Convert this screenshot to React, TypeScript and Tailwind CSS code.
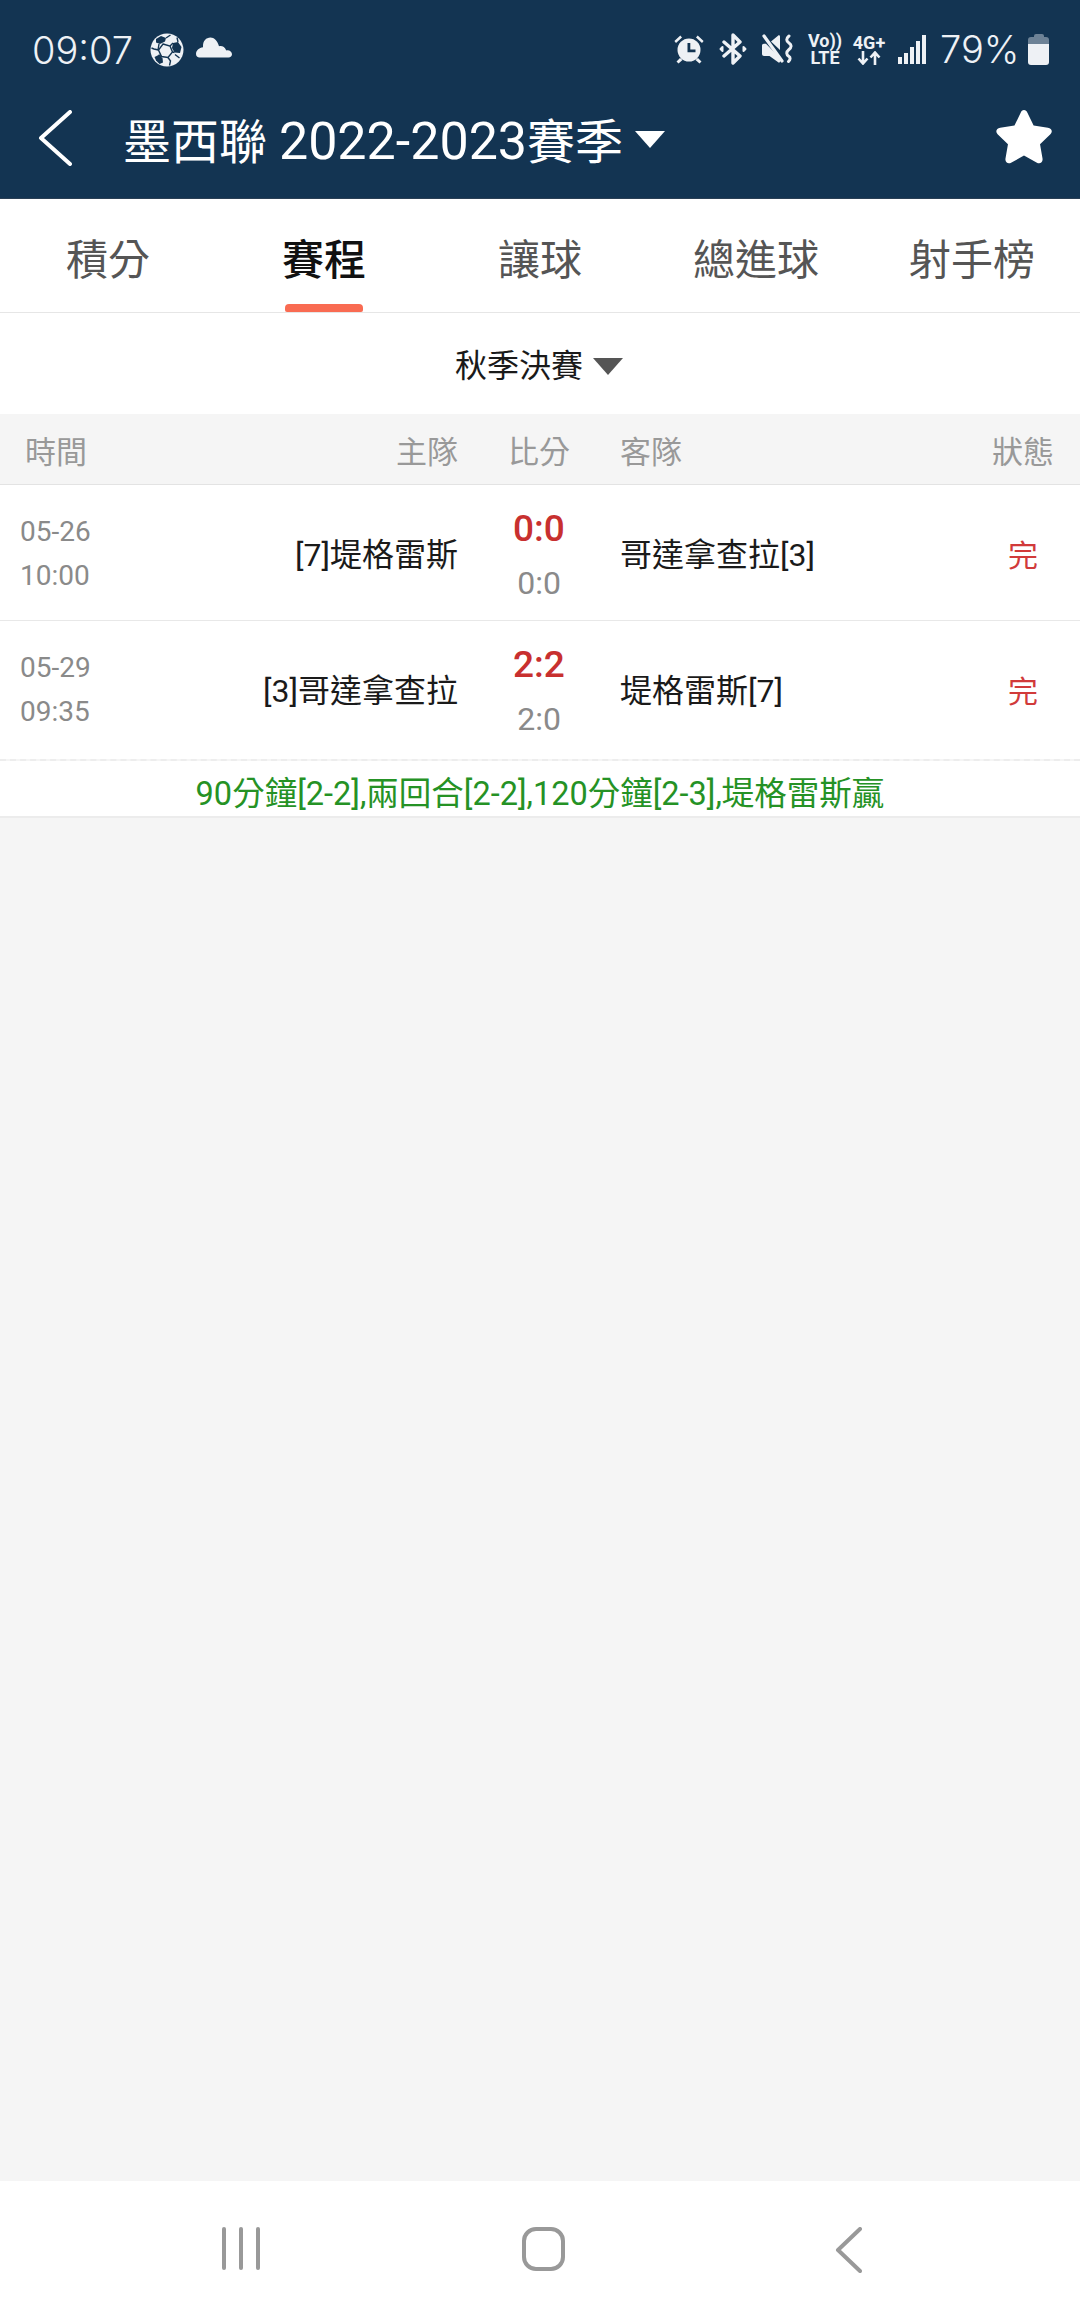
const FONT = "font-['Roboto','Noto_Sans_CJK_TC',sans-serif]";

const tabs = ["積分", "賽程", "讓球", "總進球", "射手榜"];

const matches = [
  { date: "05-26", time: "10:00", home: "[7]堤格雷斯", away: "哥達拿查拉[3]", score: "0:0", half: "0:0" },
  { date: "05-29", time: "09:35", home: "[3]哥達拿查拉", away: "堤格雷斯[7]", score: "2:2", half: "2:0" },
];

function SoccerBall() {
  return (
    <svg width="34" height="34" viewBox="0 0 34 34">
      <circle cx="17" cy="17" r="16.5" fill="#eef1f5" />
      <g fill="#133452">
        <path d="M23 10l5-1 3.500 5-1.500 6-5.500-.5L22 15z" />
        <path d="M6 6l5-3 5 2-1 3.500-5 2.500-4-1.500z" />
        <path d="M4.500 24l4-2 4 3 .5 4.500-3.500 1.500-3.500-3.500z" />
      </g>
      <g fill="none" stroke="#133452" strokeWidth="1.400">
        <path d="M13 11l7 2 2.500 6-4.500 5.500-6.500-1L8.500 17z" />
        <path d="M16 5l4.500-3M20 13l3-3M27 4.500L28 9M22.500 19l2 .5M18 24.500l2.500 3.500-1 4.500M25 21.500l4.500 3.500M11.500 23.500l-3 -1.500M8.500 17L4 16l-2.500-1M9 11l-1 6" />
      </g>
    </svg>
  );
}

function Cloud() {
  return (
    <svg width="36" height="21" viewBox="0 0 36 21">
      <path d="M3.500 20.500h29c2 0 3.500-1.500 3.500-3.200 0-2.300-2-4-4.500-4-.4 0-.8 0-1.200.1C29 10.500 27 9 24.500 9c-.5 0-1 .1-1.500.2C21.500 3.700 18 .5 14.500.5 10 .5 7 4 7 9c0 .5 0 .9.100 1.300C3 11 0 13.500 0 17c0 2 1.500 3.500 3.500 3.500z" fill="#eef1f5" />
    </svg>
  );
}

function Alarm() {
  return (
    <svg width="30" height="30" viewBox="0 0 30 30" fill="#eef1f5">
      <circle cx="15" cy="16" r="11.500" />
      <path d="M2 9L8 3.500 6.300 1.500.4 7zM28 9L22 3.500l1.700-2L29.600 7z" />
      <path d="M6 24l-3.500 3.500 2 2 4-3.500zM24 24l3.500 3.500-2 2-4-3.500z" />
      <path d="M13.500 9h2.800v6.500h5.200v2.700h-8z" fill="#133452" />
    </svg>
  );
}

function Bluetooth() {
  return (
    <svg width="28" height="32" viewBox="0 0 28 32" fill="none" stroke="#eef1f5" strokeWidth="3.400" strokeLinejoin="round" strokeLinecap="round">
      <path d="M5 9l16 14-7 7V2l7 7L5 23" />
      <path d="M1.500 16l2-2v4zM26.500 16l-2-2v4z" fill="#eef1f5" strokeWidth="2" />
    </svg>
  );
}

function Mute() {
  return (
    <svg width="32" height="30" viewBox="0 0 32 30">
      <path d="M1 11.500c0-1 .8-1.800 1.800-1.800H5L19 24v3.500c0 1-1 1.500-1.800.8L8.500 22H3c-1.100 0-2-.9-2-2z" fill="#eef1f5" />
      <path d="M10 7.500l7-5.800c.8-.7 2-.3 2 .8V16z" fill="#eef1f5" />
      <path d="M3 2l18 25" stroke="#eef1f5" strokeWidth="3.200" strokeLinecap="round" />
      <path d="M28 2c-3 2.500-3 5 0 7 3 2 2.500 4.500 0 6.500-3 2.500-3 5 0 7 1.500 1 1.500 3-.5 5" fill="none" stroke="#eef1f5" strokeWidth="3" strokeLinecap="round" />
    </svg>
  );
}

function Arrows() {
  return (
    <svg width="24" height="14" viewBox="0 0 24 14" fill="none" stroke="#eef1f5" strokeWidth="2.600">
      <path d="M6 0v12M1.500 7.500L6 12.500l4.500-5" />
      <path d="M18 14V2M13.500 6.500L18 1.500l4.500 5" />
    </svg>
  );
}

function Signal() {
  return (
    <div className="flex items-end gap-[2px] h-[29px]">
      <span className="w-[4px] h-[7px] bg-[#eef1f5]" />
      <span className="w-[4px] h-[11px] bg-[#eef1f5]" />
      <span className="w-[4px] h-[17px] bg-[#eef1f5]" />
      <span className="w-[4px] h-[23px] bg-[#eef1f5]" />
      <span className="w-[4px] h-[29px] bg-[#eef1f5]" />
    </div>
  );
}

function Battery() {
  return (
    <div className="flex flex-col items-center w-[21px] h-[31px]">
      <span className="w-[10px] h-[3px] rounded-t-[2px] bg-[#6d8296]" />
      <span className="w-[21px] h-[7px] rounded-t-[3px] bg-[#6d8296]" />
      <span className="w-[21px] h-[21px] rounded-b-[3px] bg-[#eef1f5]" />
    </div>
  );
}

function StatusBar() {
  return (
    <div className="h-[80px] flex items-start justify-between pt-[33px] pl-[32px] pr-[31px] text-[#eef1f5]">
      <div className="flex items-center">
        <span className="font-['Inter',sans-serif] text-[38px] leading-[34px] font-light w-[118px]">09:07</span>
        <SoccerBall />
        <span className="ml-[12px] mt-[-6px]"><Cloud /></span>
      </div>
      <div className="flex items-center h-[32px]">
        <Alarm />
        <span className="ml-[15px]"><Bluetooth /></span>
        <span className="ml-[14px]"><Mute /></span>
        <div className="ml-[16px] w-[32px] flex flex-col items-center font-['Roboto',sans-serif] font-bold text-[18px] leading-[17px]">
          <span>Vo))</span>
          <span>LTE</span>
        </div>
        <div className="ml-[11px] w-[34px] flex flex-col items-center font-['Roboto',sans-serif] font-bold text-[18px] leading-[17px]">
          <span>4G+</span>
          <Arrows />
        </div>
        <span className="ml-[12px]"><Signal /></span>
        <span className="ml-[14px] font-['Inter',sans-serif] text-[38px] leading-[34px] font-light w-[84px] whitespace-nowrap">79%</span>
        <span className="ml-[4px]"><Battery /></span>
      </div>
    </div>
  );
}

function NavBar() {
  return (
    <div className="h-[118px] flex items-center pl-[38px] pr-[26px] pb-[2px] text-white">
      <svg width="34" height="56" viewBox="0 0 34 56" fill="none" stroke="white" strokeWidth="4" strokeLinecap="round" strokeLinejoin="round">
        <path d="M32 2L3 28l29 26" />
      </svg>
      <span className="ml-[51px] pt-[8px] text-[48px] leading-[56px]">
        墨西聯 <span className="text-[52px]">2022-2023</span>賽季
      </span>
      <span className="ml-[12px] mt-[2px] w-0 h-0 border-x-[15px] border-x-transparent border-t-[17px] border-t-white" />
      <svg className="ml-auto" width="60" height="60" viewBox="0 0 58 58">
        <path d="M29 2c1.500 0 2.600 1 3.300 2.500l6 12.500 13.800 2c3.600.5 5 3.800 2.400 6.300l-10 9.800 2.400 13.800c.6 3.600-2.500 5.500-5.400 4L29 46l-12.500 6.900c-2.900 1.500-6-.4-5.400-4l2.400-13.800-10-9.800C1 22.800 2.400 19.500 6 19l13.800-2 6-12.500C26.400 3 27.500 2 29 2z" fill="white" />
      </svg>
    </div>
  );
}

function TableRow({ m }: { m: (typeof matches)[number] }) {
  return (
    <div className="grid grid-cols-[180px_278px_162px_346px_114px] items-center h-[135px] bg-white">
      <div className="pl-[20px] pt-[2px] text-[28px] leading-[44px] text-[#8a8a8a]">
        <div>{m.date}</div>
        <div>{m.time}</div>
      </div>
      <div className="pt-[5px] text-right text-[32px] text-[#1a1a1a]">{m.home}</div>
      <div className="pt-[11px] flex flex-col items-center">
        <span className="text-[37px] leading-[50px] font-medium text-[#c8302f]">{m.score}</span>
        <span className="text-[32px] leading-[59px] text-[#8a8a8a]">{m.half}</span>
      </div>
      <div className="pt-[5px] text-[32px] text-[#1a1a1a]">{m.away}</div>
      <div className="pt-[5px] text-right pr-[42px] text-[30px] text-[#d13a3a]">完</div>
    </div>
  );
}

export default function App() {
  return (
    <div className={`${FONT} w-full h-[2316px] flex flex-col bg-[#f5f5f5]`}>
      <header className="bg-[#133452] border-b border-[#2a3f55]">
        <StatusBar />
        <NavBar />
      </header>

      <div className="grid grid-cols-5 h-[114px] bg-white border-b border-[#e6e6e6]">
        {tabs.map((t, i) => (
          <div key={t} className="relative flex items-center justify-center pt-[10px]">
            <span className={`text-[42px] ${i === 1 ? "text-[#111111] font-medium" : "text-[#555555]"}`}>{t}</span>
            {i === 1 && <span className="absolute bottom-0 w-[78px] h-[8px] rounded-t-[4px] rounded-b-[2px] bg-[#f96b52]" />}
          </div>
        ))}
      </div>

      <div className="h-[101px] bg-white flex items-center justify-center pt-[5px] pr-[2px]">
        <span className="text-[32px] text-[#1a1a1a]">秋季決賽</span>
        <span className="ml-[10px] w-0 h-0 border-x-[15px] border-x-transparent border-t-[17px] border-t-[#555555]" />
      </div>

      <div className="grid grid-cols-[180px_278px_162px_346px_114px] items-center h-[71px] pt-[8px] border-b border-[#e3e3e3] text-[31px] text-[#999999]">
        <div className="pl-[25px]">時間</div>
        <div className="text-right">主隊</div>
        <div className="text-center">比分</div>
        <div>客隊</div>
        <div className="text-right pr-[26px]">狀態</div>
      </div>

      <TableRow m={matches[0]} />
      <div className="h-px bg-[#e8e8e8]" />
      <TableRow m={matches[1]} />
      <div className="h-[3px] bg-white" />
      <div className="border-t-2 border-dashed border-[#ededed]" />
      <div className="h-[57px] pt-[12px] bg-white border-b-2 border-[#ececec] flex items-center justify-center text-[32.5px] text-[#259225]">
        90分鐘[2-2],兩回合[2-2],120分鐘[2-3],堤格雷斯贏
      </div>

      <div className="flex-1" />

      <nav className="h-[135px] bg-white">
        <div className="h-full flex items-start pt-[46px]">
          <div className="ml-[222px] flex gap-[13px]">
            <span className="w-[4px] h-[43px] rounded-full bg-[#999999]" />
            <span className="w-[4px] h-[43px] rounded-full bg-[#999999]" />
            <span className="w-[4px] h-[43px] rounded-full bg-[#999999]" />
          </div>
          <span className="ml-[262px] w-[43px] h-[44px] rounded-[14px] border-[4px] border-[#999999]" />
          <svg className="ml-[270px]" width="27" height="46" viewBox="0 0 27 46" fill="none" stroke="#999999" strokeWidth="4" strokeLinecap="round" strokeLinejoin="round">
            <path d="M25 2L3 23l22 21" />
          </svg>
        </div>
      </nav>
    </div>
  );
}
